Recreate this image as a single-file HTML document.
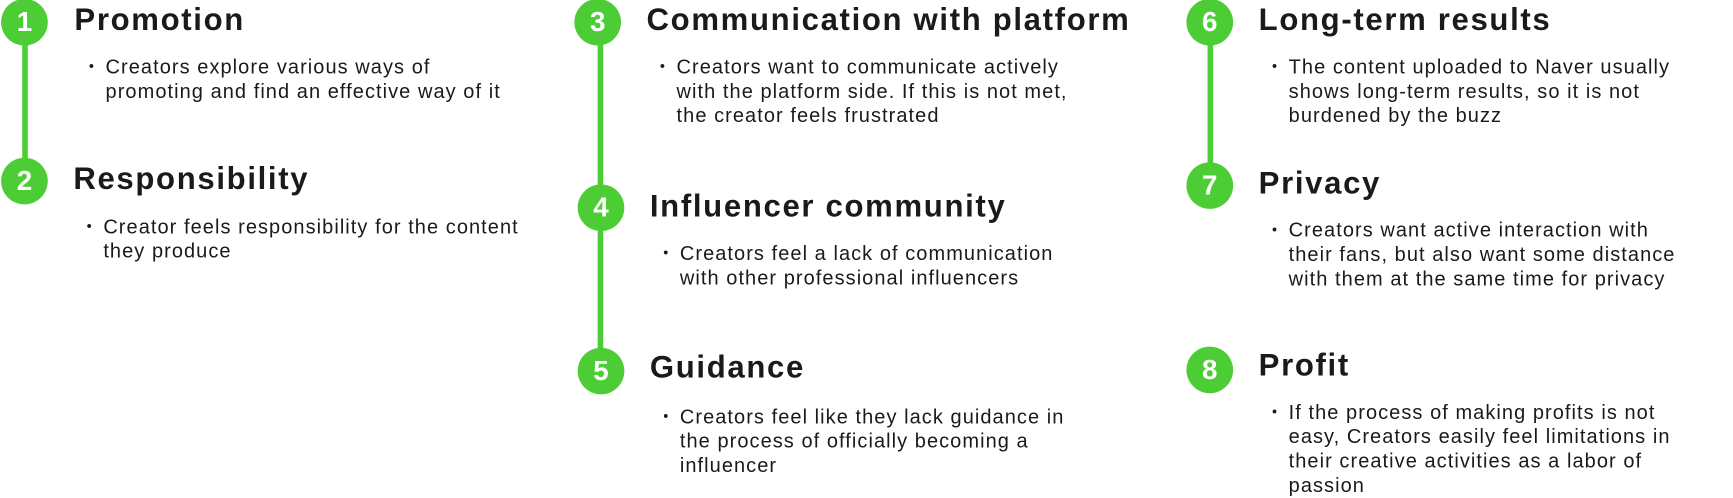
<!DOCTYPE html>
<html><head><meta charset="utf-8"><style>
html,body{margin:0;padding:0;background:#fff;width:1733px;height:494px;overflow:hidden}
#w{position:absolute;left:0;top:0;width:1560px;height:445px;transform:scale(1.1109);transform-origin:0 0;font-family:"Liberation Sans",sans-serif;color:#1a1a1a}
.c{position:absolute;width:42px;height:42px;margin:-21px 0 0 -21px;border-radius:50%;background:#4ccd35;color:#fff;font-weight:bold;font-size:25px;line-height:42px;text-align:center}
.l{position:absolute;width:5px;margin-left:-2.5px;background:#4ccd35}
.t{position:absolute;font-weight:bold;font-size:28px;line-height:30px;margin-top:-15px;letter-spacing:1.5px;white-space:nowrap}
.b{position:absolute;font-size:18px;line-height:22px;letter-spacing:0.95px;white-space:nowrap}
.b:before{content:"•";position:absolute;left:-15px;font-size:13px}
</style></head><body><div id="w">
<div class="l" style="left:22px;top:20px;height:143px"></div>
<div class="l" style="left:540px;top:20px;height:314px"></div>
<div class="l" style="left:1089px;top:20px;height:147px"></div>

<div class="c" style="left:22px;top:20px">1</div>
<div class="c" style="left:22px;top:163px">2</div>
<div class="c" style="left:538px;top:20px">3</div>
<div class="c" style="left:541px;top:187px">4</div>
<div class="c" style="left:541px;top:334px">5</div>
<div class="c" style="left:1089px;top:20px">6</div>
<div class="c" style="left:1089px;top:167px">7</div>
<div class="c" style="left:1089px;top:333px">8</div>

<div class="t" style="left:67px;top:18px">Promotion</div>
<div class="b" style="left:95px;top:49px">Creators explore various ways of<br>promoting and find an effective way of it</div>
<div class="t" style="left:66px;top:161px">Responsibility</div>
<div class="b" style="left:93px;top:193px">Creator feels responsibility for the content<br>they produce</div>

<div class="t" style="left:582px;top:18px">Communication with platform</div>
<div class="b" style="left:609px;top:49px">Creators want to communicate actively<br>with the platform side. If this is not met,<br>the creator feels frustrated</div>
<div class="t" style="left:585px;top:186px">Influencer community</div>
<div class="b" style="left:612px;top:217px">Creators feel a lack of communication<br>with other professional influencers</div>
<div class="t" style="left:585px;top:331px">Guidance</div>
<div class="b" style="left:612px;top:364px">Creators feel like they lack guidance in<br>the process of officially becoming a<br>influencer</div>

<div class="t" style="left:1133px;top:18px">Long-term results</div>
<div class="b" style="left:1160px;top:49px">The content uploaded to Naver usually<br>shows long-term results, so it is not<br>burdened by the buzz</div>
<div class="t" style="left:1133px;top:165px">Privacy</div>
<div class="b" style="left:1160px;top:196px">Creators want active interaction with<br>their fans, but also want some distance<br>with them at the same time for privacy</div>
<div class="t" style="left:1133px;top:329px">Profit</div>
<div class="b" style="left:1160px;top:360px">If the process of making profits is not<br>easy, Creators easily feel limitations in<br>their creative activities as a labor of<br>passion</div>
</div></body></html>
